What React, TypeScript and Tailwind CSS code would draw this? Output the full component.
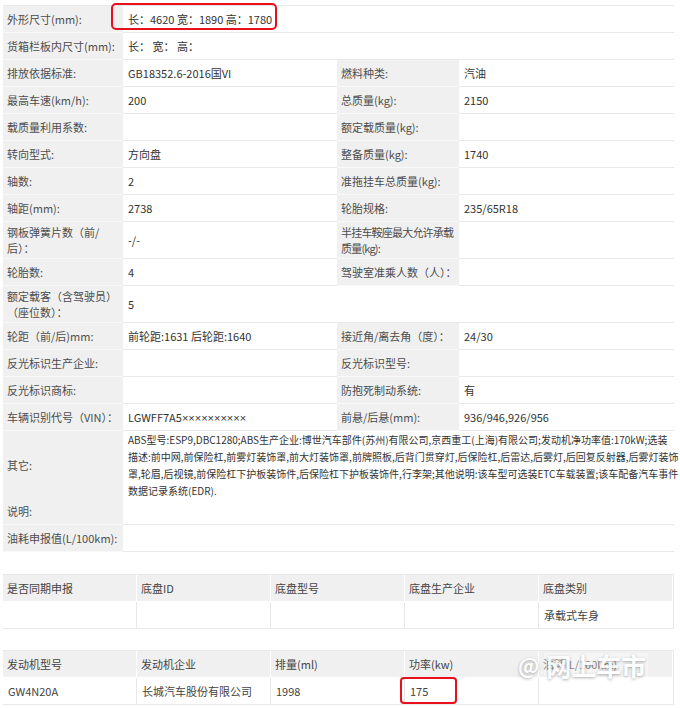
import type { ReactNode } from "react";

const label = "flex items-center whitespace-nowrap bg-[#f0f0f0] pl-[4px] text-[#4d4d4d] border-b border-[#f8f8f8]";
const value = "flex items-center whitespace-nowrap bg-white pl-[5px] text-[#333] border-b border-[#e8e8e8]";

function Row({
  name,
  val,
  name2,
  val2,
  h = "h-[27px]"
}: {
  name: ReactNode;
  val?: ReactNode;
  name2?: ReactNode;
  val2?: ReactNode;
  h?: string;
}) {
  const paired = name2 !== undefined;
  return (
    <div className={`grid grid-cols-[120px_214px_122px_215px] ${h}`}>
      <div className={label}>{name}</div>
      {paired ? (
        <>
          <div className={value}>{val}</div>
          <div className={label}>{name2}</div>
          <div className={value}>{val2}</div>
        </>
      ) : (
        <div className={`${value} col-span-3`}>{val}</div>
      )}
    </div>
  );
}

function SmallTable({ head, body }: { head: string[]; body: string[] }) {
  return (
    <div className="ml-[3px] grid w-[671px] grid-cols-5 border-t border-r border-[#e8e8e8] text-[#444]">
      {head.map((t, i) => (
        <div key={"h" + i} className="flex h-[27px] items-center border-r border-b border-white bg-[#f0f0f0] pl-[4px] last:border-r-0">
          {t}
        </div>
      ))}
      {body.map((t, i) => (
        <div key={"b" + i} className="flex h-[27px] items-center border-r border-b border-[#e8e8e8] bg-white pl-[5px] last:border-r-0">
          {t}
        </div>
      ))}
    </div>
  );
}

export default function App() {
  return (
    <div className="relative h-[708px] w-[680px] overflow-hidden bg-white pt-[5px] font-['Noto_Sans_CJK_SC','Liberation_Sans',sans-serif] text-[11px] leading-[16px]">
      <div className="ml-[3px] w-[671px] border-t border-r border-[#e8e8e8]">
        <Row name="外形尺寸(mm):" val="长：4620 宽：1890 高：1780" />
        <Row name="货箱栏板内尺寸(mm):" val="长：  宽：  高：" />
        <Row name="排放依据标准:" val="GB18352.6-2016国VI" name2="燃料种类:" val2="汽油" />
        <Row name="最高车速(km/h):" val="200" name2="总质量(kg):" val2="2150" />
        <Row name="载质量利用系数:" val="" name2="额定载质量(kg):" val2="" />
        <Row name="转向型式:" val="方向盘" name2="整备质量(kg):" val2="1740" />
        <Row name="轴数:" val="2" name2="准拖挂车总质量(kg):" val2="" />
        <Row name="轴距(mm):" val="2738" name2="轮胎规格:" val2="235/65R18" />
        <Row
          h="h-[37px]"
          name={<span>钢板弹簧片数（前/<br />后）：</span>}
          val="-/-"
          name2={<span className="tracking-[-0.8px]">半挂车鞍座最大允许承载<br />质量(kg):</span>}
          val2=""
        />
        <Row name="轮胎数:" val="4" name2="驾驶室准乘人数（人）：" val2="" />
        <Row
          h="h-[37px]"
          name={<span>额定载客（含驾驶员）<br />（座位数）：</span>}
          val="5"
        />
        <Row name="轮距（前/后)mm:" val="前轮距:1631 后轮距:1640" name2="接近角/离去角（度）：" val2="24/30" />
        <Row name="反光标识生产企业:" val="" name2="反光标识型号:" val2="" />
        <Row name="反光标识商标:" val="" name2="防抱死制动系统:" val2="有" />
        <Row
          name="车辆识别代号（VIN）："
          val={
            <span>
              LGWFF7A5<span className="font-['Liberation_Sans',sans-serif] text-[11px]">××××××××××</span>
            </span>
          }
          name2="前悬/后悬(mm):"
          val2="936/946,926/956"
        />
        <Row
          h="h-[67px]"
          name="其它:"
          val={
            <span className="text-[10px] leading-[17px]">
              ABS型号:ESP9,DBC1280;ABS生产企业:博世汽车部件(苏州)有限公司,京西重工(上海)有限公司;发动机净功率值:170kW;选装
              <br />
              描述:前中网,前保险杠,前雾灯装饰罩,前大灯装饰罩,前牌照板,后背门贯穿灯,后保险杠,后雷达,后雾灯,后回复反射器,后雾灯装饰
              <br />
              罩,轮眉,后视镜,前保险杠下护板装饰件,后保险杠下护板装饰件,行李架;其他说明:该车型可选装ETC车载装置;该车配备汽车事件
              <br />
              数据记录系统(EDR).
            </span>
          }
        />
        <Row name="说明:" val="" />
        <Row name="油耗申报值(L/100km):" val="" />
      </div>

      <div className="mt-[22px]">
        <SmallTable
          head={["是否同期申报", "底盘ID", "底盘型号", "底盘生产企业", "底盘类别"]}
          body={["", "", "", "", "承载式车身"]}
        />
      </div>

      <div className="mt-[21px]">
        <SmallTable
          head={["发动机型号", "发动机企业", "排量(ml)", "功率(kw)", "油耗(L/100km)"]}
          body={["GW4N20A", "长城汽车股份有限公司", "1998", "175", ""]}
        />
      </div>

      {/* red highlight frames */}
      <div className="absolute left-[111px] top-[3px] h-[27px] w-[166px] rounded-[5px] border-[2.5px] border-[#e8101c]" />
      <div className="absolute left-[400px] top-[677px] h-[27px] w-[57px] rounded-[4px] border-[2.5px] border-[#e8101c]" />

      {/* watermark */}
      <div className="absolute left-[518px] top-[653px] flex items-center gap-[5px] text-white opacity-90 [text-shadow:0_1px_3px_rgba(0,0,0,0.35)]">
        <span className="text-[21px] font-bold leading-none">@</span>
        <span className="bg-white/40 px-[2px] text-[25px] font-bold leading-none">网上车市</span>
      </div>
    </div>
  );
}
